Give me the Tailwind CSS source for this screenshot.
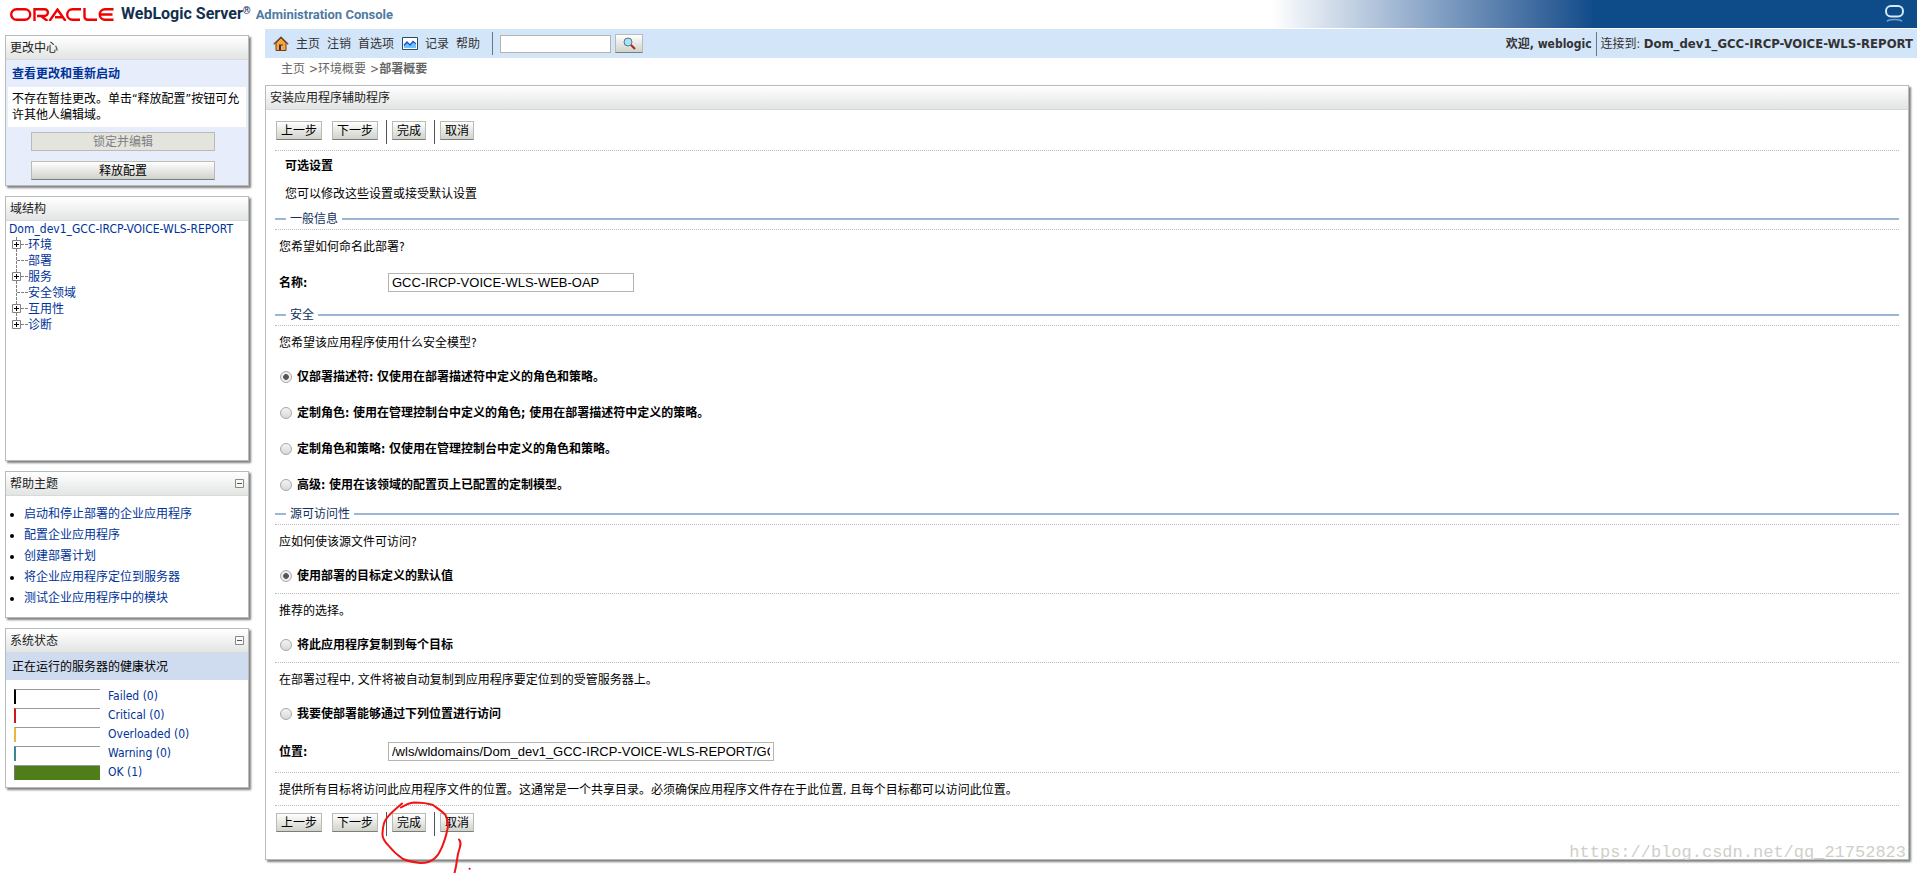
<!DOCTYPE html>
<html lang="zh-CN">
<head>
<meta charset="utf-8">
<title>安装应用程序辅助程序</title>
<script src="https://cdn.jsdelivr.net/npm/@tailwindcss/browser@4"></script>
</head>
<body class="relative min-h-screen bg-white text-black text-[12px] leading-[16px] font-['DejaVu_Sans_Condensed','Noto_Sans_CJK_SC',sans-serif]">

<header class="flex h-7 items-stretch">
  <div class="flex items-center gap-[6px] pl-[10px]">
    <svg class="h-[13px] w-[105px]" viewBox="0 0 105 13" role="img" aria-label="Oracle" fill="none" stroke="#f00000" stroke-width="2.4">
      <rect x="1.2" y="1.2" width="19" height="10.600" rx="5.3"/>
      <path d="M24.500 13V1.200h10a3.300 3.300 0 0 1 0 6.800H27M31 8l6.500 5"/>
      <path d="M39.500 13l8-11.500L55.500 13M45 9.300h7"/>
      <path d="M71 1.200h-8.500a5.300 5.300 0 0 0 0 10.600H70"/>
      <path d="M74.500 0v8.800a3 3 0 0 0 3 3H87"/>
      <path d="M103.500 1.200H95a5.300 5.300 0 0 0 0 10.600h8.500M90 6.500h12.500"/>
    </svg>
    <div class="flex items-baseline gap-[5px] whitespace-nowrap font-['Roboto','Noto_Sans_CJK_SC',sans-serif] font-bold">
      <span class="text-[16px] leading-[20px] text-[#12304f]">WebLogic Server<sup class="text-[10px]">®</sup></span>
      <span class="text-[13px] leading-[20px] text-[#4f7aa3]">Administration Console</span>
    </div>
  </div>
  <div class="ml-auto flex w-[645px] items-start justify-end bg-linear-to-r from-white to-[#0e4b89] to-50% pt-1 pr-3">
    <svg class="h-5 w-[21px]" viewBox="0 0 21 20" fill="none" aria-hidden="true">
      <rect x="2" y="2" width="17" height="10.500" rx="5" stroke="#d6e8fb" stroke-width="2"/>
      <path d="M3 17.500c1-1.700 3-2 7.500-2s6.500.3 7.500 2" stroke="#6f9ccb" stroke-width="1.500"/>
    </svg>
  </div>
</header>

<div class="flex items-start gap-4 pt-px">
  <aside class="ml-[5px] flex w-[244px] shrink-0 flex-col gap-[10px] pt-[6px]">

    <section class="border border-[#b4bcbc] bg-[#e7edfb] shadow-[2px_2px_2px_#808080]">
      <h2 class="h-6 border-b border-[#d8dada] bg-linear-to-b from-white to-[#e2e5e3] px-1 leading-[24px] text-[#222]">更改中心</h2>
      <h3 class="px-[6px] pt-[6px] pb-[5px] font-bold text-[#003399]">查看更改和重新启动</h3>
      <p class="mx-[2px] bg-white px-1 py-1">不存在暂挂更改。单击“释放配置”按钮可允许其他人编辑域。</p>
      <div class="flex flex-col gap-[10px] pt-[5px] pr-[33px] pb-[5px] pl-[25px]">
        <button disabled class="h-[19px] border border-[#b9bbb5] bg-[#e3e4de] leading-[16px] text-[#808080]">锁定并编辑</button>
        <button class="h-[19px] border border-[#b9bbb5] border-b-[#7c7f79] bg-linear-to-b from-white to-[#d0d2cb] leading-[16px]">释放配置</button>
      </div>
    </section>

    <section class="min-h-[265px] border border-[#b4bcbc] bg-white shadow-[2px_2px_2px_#808080]">
      <h2 class="h-6 border-b border-[#d8dada] bg-linear-to-b from-white to-[#e2e5e3] px-1 leading-[24px] text-[#222]">域结构</h2>
      <nav class="px-[3px] text-[#003399]">
        <a href="#" class="block whitespace-nowrap">Dom_dev1_GCC-IRCP-VOICE-WLS-REPORT</a>
        <ul>
          <li class="flex h-4 items-center"><svg class="h-4 w-[19px]" viewBox="0 0 19 16" fill="none" aria-hidden="true"><path d="M7.500 0v16M12 7.500h7" stroke="#808080" stroke-dasharray="3 1"/><path d="M3.500 3.500h8v8h-8z" fill="#fff" stroke="#808080"/><path d="M5 7.500h5M7.500 5v5" stroke="#000"/></svg><a href="#">环境</a></li>
          <li class="flex h-4 items-center"><svg class="h-4 w-[19px]" viewBox="0 0 19 16" fill="none" aria-hidden="true"><path d="M7.500 0v16M8 7.500h11" stroke="#808080" stroke-dasharray="3 1"/></svg><a href="#">部署</a></li>
          <li class="flex h-4 items-center"><svg class="h-4 w-[19px]" viewBox="0 0 19 16" fill="none" aria-hidden="true"><path d="M7.500 0v16M12 7.500h7" stroke="#808080" stroke-dasharray="3 1"/><path d="M3.500 3.500h8v8h-8z" fill="#fff" stroke="#808080"/><path d="M5 7.500h5M7.500 5v5" stroke="#000"/></svg><a href="#">服务</a></li>
          <li class="flex h-4 items-center"><svg class="h-4 w-[19px]" viewBox="0 0 19 16" fill="none" aria-hidden="true"><path d="M7.500 0v16M8 7.500h11" stroke="#808080" stroke-dasharray="3 1"/></svg><a href="#">安全领域</a></li>
          <li class="flex h-4 items-center"><svg class="h-4 w-[19px]" viewBox="0 0 19 16" fill="none" aria-hidden="true"><path d="M7.500 0v16M12 7.500h7" stroke="#808080" stroke-dasharray="3 1"/><path d="M3.500 3.500h8v8h-8z" fill="#fff" stroke="#808080"/><path d="M5 7.500h5M7.500 5v5" stroke="#000"/></svg><a href="#">互用性</a></li>
          <li class="flex h-4 items-center"><svg class="h-4 w-[19px]" viewBox="0 0 19 16" fill="none" aria-hidden="true"><path d="M7.500 0v7M12 7.500h7" stroke="#808080" stroke-dasharray="3 1"/><path d="M3.500 3.500h8v8h-8z" fill="#fff" stroke="#808080"/><path d="M5 7.500h5M7.500 5v5" stroke="#000"/></svg><a href="#">诊断</a></li>
        </ul>
      </nav>
    </section>

    <section class="border border-[#b4bcbc] bg-white shadow-[2px_2px_2px_#808080]">
      <div class="flex h-6 items-center justify-between border-b border-[#d8dada] bg-linear-to-b from-white to-[#e2e5e3] px-1">
        <h2 class="leading-[24px] text-[#222]">帮助主题</h2>
        <button aria-label="折叠帮助主题"><svg class="size-[9px]" viewBox="0 0 9 9" aria-hidden="true"><path d="M.5.5h8v8h-8z" fill="#f8f8f4" stroke="#8a8a7c"/><path d="M2 4.500h5" stroke="#555"/></svg></button>
      </div>
      <ul class="flex list-disc flex-col gap-[5px] pt-[10px] pb-[11px] pl-[18px] marker:text-black">
        <li><a href="#" class="text-[#003399]">启动和停止部署的企业应用程序</a></li>
        <li><a href="#" class="text-[#003399]">配置企业应用程序</a></li>
        <li><a href="#" class="text-[#003399]">创建部署计划</a></li>
        <li><a href="#" class="text-[#003399]">将企业应用程序定位到服务器</a></li>
        <li><a href="#" class="text-[#003399]">测试企业应用程序中的模块</a></li>
      </ul>
    </section>

    <section class="border border-[#b4bcbc] bg-white shadow-[2px_2px_2px_#808080]">
      <div class="flex h-6 items-center justify-between border-b border-[#d8dada] bg-linear-to-b from-white to-[#e2e5e3] px-1">
        <h2 class="leading-[24px] text-[#222]">系统状态</h2>
        <button aria-label="折叠系统状态"><svg class="size-[9px]" viewBox="0 0 9 9" aria-hidden="true"><path d="M.5.5h8v8h-8z" fill="#f8f8f4" stroke="#8a8a7c"/><path d="M2 4.500h5" stroke="#555"/></svg></button>
      </div>
      <h3 class="bg-[#cfdbef] px-[6px] pt-[6px] pb-[5px]">正在运行的服务器的健康状况</h3>
      <ul class="flex flex-col gap-[3px] px-2 pt-2 pb-[7px] text-[#003399]">
        <li class="flex h-4 items-center gap-2"><span class="h-[15px] w-[86px] border-t border-l-2 border-t-[#999] border-l-black"></span><a href="#">Failed (0)</a></li>
        <li class="flex h-4 items-center gap-2"><span class="h-[15px] w-[86px] border-t border-l-2 border-t-[#999] border-l-[#d01818]"></span><a href="#">Critical (0)</a></li>
        <li class="flex h-4 items-center gap-2"><span class="h-[15px] w-[86px] border-t border-l-2 border-t-[#999] border-l-[#e5b93c]"></span><a href="#">Overloaded (0)</a></li>
        <li class="flex h-4 items-center gap-2"><span class="h-[15px] w-[86px] border-t border-l-2 border-t-[#999] border-l-[#3c8694]"></span><a href="#">Warning (0)</a></li>
        <li class="flex h-4 items-center gap-2"><span class="h-[15px] w-[86px] border-t border-l border-t-[#999] border-l-[#777] bg-[#4f7d1a]"></span><a href="#">OK (1)</a></li>
      </ul>
    </section>
  </aside>

  <main class="min-w-0 flex-1">
    <div class="flex h-[29px] items-center justify-between bg-[#d3e5f9] pr-1 pl-2 text-[#333]">
      <div class="flex items-center gap-[7px]">
        <svg class="h-[15px] w-4" viewBox="0 0 16 15" aria-hidden="true"><path d="M3 7v7.500h10V7L8 2z" fill="#f9a53a" stroke="#7a3b10"/><path d="M.8 8.300L8 1.200l7.200 7.100" fill="none" stroke="#6b4a30" stroke-width="1.300"/><path d="M6 8.500h4V14H6z" fill="#3d3530"/><path d="M8 9.500h2V14H8z" fill="#d9b48a"/></svg>
        <a href="#">主页</a>
        <a href="#">注销</a>
        <a href="#">首选项</a>
        <svg class="ml-px h-[13px] w-4" viewBox="0 0 16 13" aria-hidden="true"><path d="M.5.5h15v12H.5z" fill="#fff" stroke="#2b4c66"/><path d="M2 11V7l3-2 3 3 3-3 3 3v3z" fill="#6cc3fb"/><path d="M2 8.500l3-3.500 3 3 3-3.500 3 2.500" fill="none" stroke="#1f4fd0" stroke-width="1.300"/></svg>
        <a href="#">记录</a>
        <a href="#">帮助</a>
        <span class="ml-[5px] h-[23px] w-px bg-[#6b7785]"></span>
        <form class="flex items-center gap-1">
          <input type="search" aria-label="搜索" class="h-[18px] w-[111px] border border-[#b5b5ad] bg-white px-1">
          <button type="button" aria-label="搜索" class="flex h-[19px] w-7 items-center justify-center border border-[#b9bbb5] border-b-[#7c7f79] bg-linear-to-b from-white to-[#d0d2cb]"><svg class="size-[13px]" viewBox="0 0 13 13" fill="none" aria-hidden="true"><circle cx="5" cy="5" r="4" fill="#a9e2f5" stroke="#55788a"/><path d="M8 8l4 4" stroke="#b02020" stroke-width="2"/></svg></button>
        </form>
      </div>
      <div class="flex items-center gap-1 whitespace-nowrap">
        <span class="font-bold">欢迎, weblogic</span>
        <span class="h-6 w-px bg-[#6b7785]"></span>
        <span>连接到: <b class="text-[13px]">Dom_dev1_GCC-IRCP-VOICE-WLS-REPORT</b></span>
      </div>
    </div>

    <nav class="flex h-[27px] gap-1 pt-[3px] pl-4 text-[#666]">
      <a href="#">主页</a><span>&gt;<a href="#">环境概要</a></span><span>&gt;<b>部署概要</b></span>
    </nav>

    <section class="mr-2 border border-[#b4bcbc] bg-white shadow-[2px_2px_2px_#808080]">
      <h1 class="h-6 border-b border-[#d8dada] bg-linear-to-b from-white to-[#e2e5e3] px-1 leading-[24px] text-[#222]">安装应用程序辅助程序</h1>
      <form class="px-[9px] pb-[23px]">
        <div class="flex h-10 items-start pt-[10px] pl-px">
          <button type="button" class="mt-px h-[19px] w-[46px] border border-[#b9bbb5] border-b-[#7c7f79] bg-linear-to-b from-white to-[#d0d2cb] leading-[16px]">上一步</button>
          <button type="button" class="mt-px ml-[10px] h-[19px] w-[46px] border border-[#b9bbb5] border-b-[#7c7f79] bg-linear-to-b from-white to-[#d0d2cb] leading-[16px]">下一步</button>
          <span class="ml-2 h-6 w-px bg-[#555]"></span>
          <button type="button" class="mt-px ml-[5px] h-[19px] w-[34px] border border-[#b9bbb5] border-b-[#7c7f79] bg-linear-to-b from-white to-[#d0d2cb] leading-[16px]">完成</button>
          <span class="ml-2 h-6 w-px bg-[#555]"></span>
          <button type="button" class="mt-px ml-[5px] h-[19px] w-[34px] border border-[#b9bbb5] border-b-[#7c7f79] bg-linear-to-b from-white to-[#d0d2cb] leading-[16px]">取消</button>
        </div>
        <div class="border-t border-dotted border-[#bbb] px-[10px] pt-[7px]">
          <h2 class="font-bold">可选设置</h2>
          <p class="pt-3">您可以修改这些设置或接受默认设置</p>
        </div>

        <fieldset class="pt-[9px]" aria-labelledby="general-title">
          <div class="flex h-4 items-center gap-1 text-[#12305c]"><span class="h-[2px] w-[11px] bg-[#9cb6d6]"></span><h3 id="general-title">一般信息</h3><span class="h-[2px] flex-1 bg-[#9cb6d6]"></span></div>
          <div class="mt-[2px] border-t border-dotted border-[#bbb] px-1 pt-[9px]">
            <p>您希望如何命名此部署?</p>
            <div class="flex items-center pt-[18px] pb-[15px]">
              <label for="name" class="w-[109px] font-bold">名称:</label>
              <input id="name" type="text" value="GCC-IRCP-VOICE-WLS-WEB-OAP" class="h-[19px] w-[246px] border border-[#b5b5b0] bg-white px-[3px] font-['Liberation_Sans',sans-serif] text-[13px]">
            </div>
          </div>
        </fieldset>

        <fieldset aria-labelledby="security-title">
          <div class="flex h-4 items-center gap-1 text-[#12305c]"><span class="h-[2px] w-[11px] bg-[#9cb6d6]"></span><h3 id="security-title">安全</h3><span class="h-[2px] flex-1 bg-[#9cb6d6]"></span></div>
          <div class="mt-[2px] border-t border-dotted border-[#bbb] px-1 pt-[9px]">
            <p>您希望该应用程序使用什么安全模型?</p>
            <div class="flex flex-col gap-5 pt-[18px] pb-[13px] font-bold">
              <label class="flex h-4 items-center gap-[5px] pl-px"><input type="radio" name="sec" checked class="size-3 appearance-none rounded-full border border-[#a8a8a8] bg-linear-to-b from-[#f4f4f4] to-[#d8d8d8] checked:bg-radial checked:from-[#555] checked:from-35% checked:to-[#eee] checked:to-45%">仅部署描述符: 仅使用在部署描述符中定义的角色和策略。</label>
              <label class="flex h-4 items-center gap-[5px] pl-px"><input type="radio" name="sec" class="size-3 appearance-none rounded-full border border-[#a8a8a8] bg-linear-to-b from-[#f4f4f4] to-[#d8d8d8]">定制角色: 使用在管理控制台中定义的角色; 使用在部署描述符中定义的策略。</label>
              <label class="flex h-4 items-center gap-[5px] pl-px"><input type="radio" name="sec" class="size-3 appearance-none rounded-full border border-[#a8a8a8] bg-linear-to-b from-[#f4f4f4] to-[#d8d8d8]">定制角色和策略: 仅使用在管理控制台中定义的角色和策略。</label>
              <label class="flex h-4 items-center gap-[5px] pl-px"><input type="radio" name="sec" class="size-3 appearance-none rounded-full border border-[#a8a8a8] bg-linear-to-b from-[#f4f4f4] to-[#d8d8d8]">高级: 使用在该领域的配置页上已配置的定制模型。</label>
            </div>
          </div>
        </fieldset>

        <fieldset aria-labelledby="source-title">
          <div class="flex h-4 items-center gap-1 text-[#12305c]"><span class="h-[2px] w-[11px] bg-[#9cb6d6]"></span><h3 id="source-title">源可访问性</h3><span class="h-[2px] flex-1 bg-[#9cb6d6]"></span></div>
          <div class="mt-[2px] border-t border-dotted border-[#bbb] px-1 pt-[9px]">
            <p>应如何使该源文件可访问?</p>
            <label class="flex h-[43px] items-center gap-[5px] pt-[9px] pl-px font-bold"><input type="radio" name="src" checked class="size-3 appearance-none rounded-full border border-[#a8a8a8] bg-linear-to-b from-[#f4f4f4] to-[#d8d8d8] checked:bg-radial checked:from-[#555] checked:from-35% checked:to-[#eee] checked:to-45%">使用部署的目标定义的默认值</label>
          </div>
          <div class="border-t border-dotted border-[#bbb] px-1 pt-[9px]">
            <p>推荐的选择。</p>
            <label class="flex h-[43px] items-center gap-[5px] pt-[9px] pl-px font-bold"><input type="radio" name="src" class="size-3 appearance-none rounded-full border border-[#a8a8a8] bg-linear-to-b from-[#f4f4f4] to-[#d8d8d8]">将此应用程序复制到每个目标</label>
          </div>
          <div class="border-t border-dotted border-[#bbb] px-1 pt-[9px]">
            <p>在部署过程中, 文件将被自动复制到应用程序要定位到的受管服务器上。</p>
            <label class="flex h-[43px] items-center gap-[5px] pt-[9px] pl-px font-bold"><input type="radio" name="src" class="size-3 appearance-none rounded-full border border-[#a8a8a8] bg-linear-to-b from-[#f4f4f4] to-[#d8d8d8]">我要使部署能够通过下列位置进行访问</label>
            <div class="flex items-center pt-[11px] pb-[11px]">
              <label for="loc" class="w-[109px] font-bold">位置:</label>
              <input id="loc" type="text" value="/wls/wldomains/Dom_dev1_GCC-IRCP-VOICE-WLS-REPORT/GCC" class="h-[19px] w-[386px] border border-[#b5b5b0] bg-white px-[3px] font-['Liberation_Sans',sans-serif] text-[13px]">
            </div>
          </div>
          <p class="border-t border-dotted border-[#bbb] px-1 pt-[9px] pb-[7px]">提供所有目标将访问此应用程序文件的位置。这通常是一个共享目录。必须确保应用程序文件存在于此位置, 且每个目标都可以访问此位置。</p>
        </fieldset>

        <div class="flex items-start border-t border-dotted border-[#bbb] pt-[6px] pl-px">
          <button type="button" class="mt-px h-[19px] w-[46px] border border-[#b9bbb5] border-b-[#7c7f79] bg-linear-to-b from-white to-[#d0d2cb] leading-[16px]">上一步</button>
          <button type="button" class="mt-px ml-[10px] h-[19px] w-[46px] border border-[#b9bbb5] border-b-[#7c7f79] bg-linear-to-b from-white to-[#d0d2cb] leading-[16px]">下一步</button>
          <span class="ml-2 h-6 w-px bg-[#555]"></span>
          <div class="relative mt-px ml-[5px]">
            <button type="button" class="block h-[19px] w-[34px] border border-[#b9bbb5] border-b-[#7c7f79] bg-linear-to-b from-white to-[#d0d2cb] leading-[16px]">完成</button>
            <svg class="pointer-events-none absolute -top-[13px] -left-[12px] z-10 h-[73px] w-[94px]" viewBox="0 0 94 73" fill="none" stroke="#f01414" stroke-width="2" stroke-linecap="round" stroke-linejoin="round" aria-hidden="true"><path d="M21 7.500C25 5 29 3 34 2.500c7 0 13 .5 19 2.500 4 3 9 6 12.500 10C68 20 69 25 67 31c-1 6-3 11-5 16-2 4-3 8-7 11-4 4-9 5-14.500 5C33 62 27 61 23 59 17 55 12 50 8 45c-4-4-6-7-5.500-12C3 28 3 24 5.500 20 10 13 16 9 22 3.500M79 39.500c3 3 1 8-.5 12.500C77 57 77 64 74.500 73M89.500 68.700h.2"/></svg>
          </div>
          <span class="ml-2 h-6 w-px bg-[#555]"></span>
          <button type="button" class="mt-px ml-[5px] h-[19px] w-[34px] border border-[#b9bbb5] border-b-[#7c7f79] bg-linear-to-b from-white to-[#d0d2cb] leading-[16px]">取消</button>
        </div>
      </form>
    </section>
  </main>
</div>

<div class="absolute right-[11px] bottom-[8px] font-['Liberation_Mono',monospace] text-[17px] leading-[24px] text-[#cfcfca]">https://blog.csdn.net/qq_21752823</div>
</body>
</html>
